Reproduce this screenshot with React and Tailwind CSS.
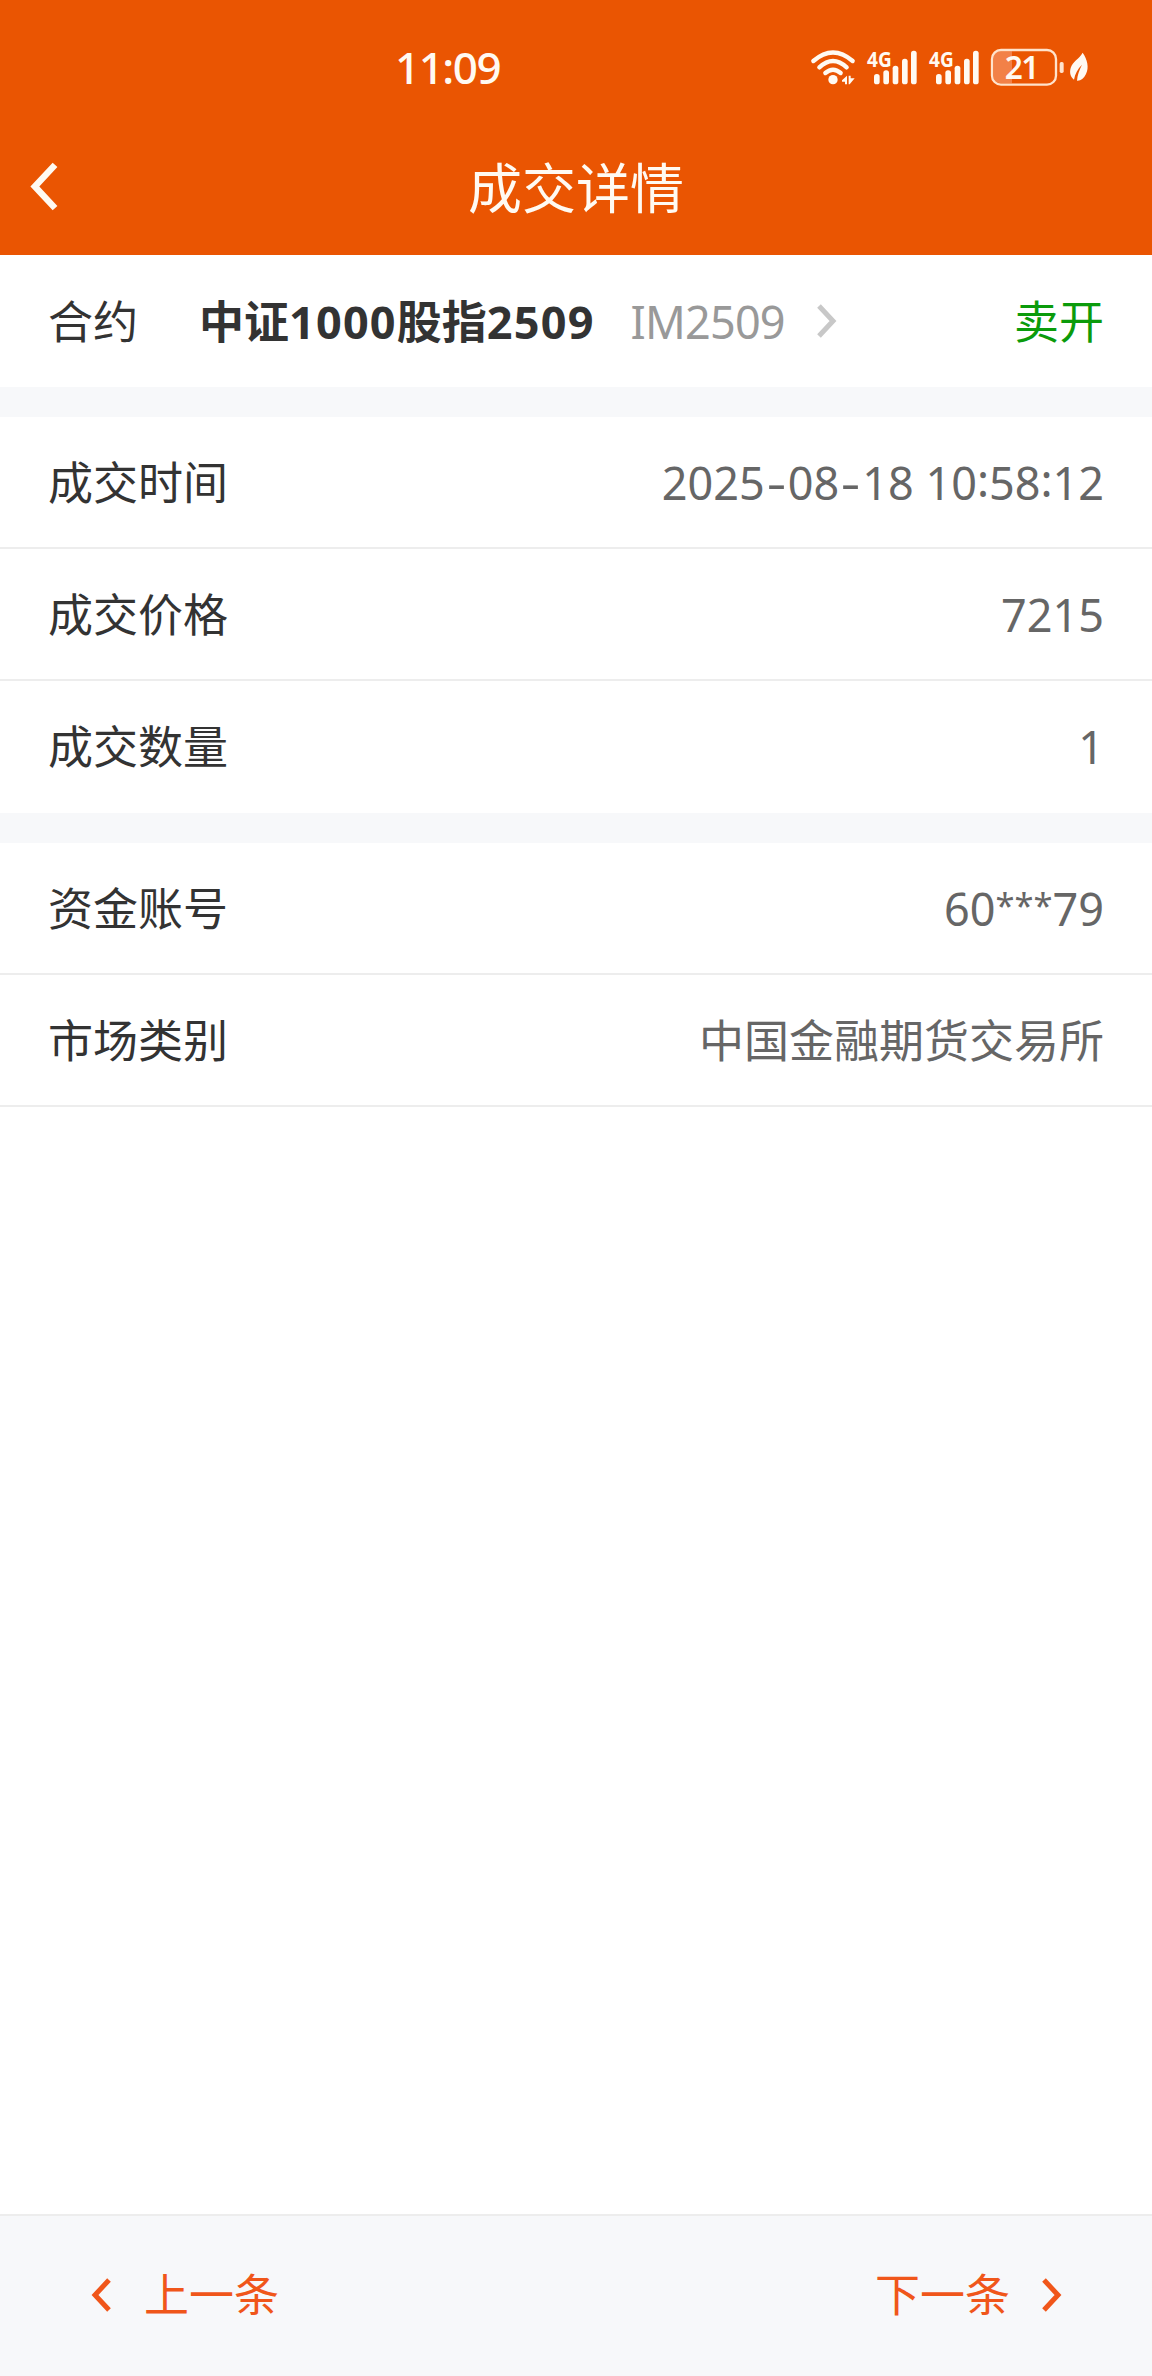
import React from 'react'

function Dash() {
    return <span className="inline-block w-[23px] text-center scale-x-[1.35] -translate-y-px">-</span>
}

const trade = [
    { label: '成交时间', value: <>2025<Dash />08<Dash />18 10<span className="relative -top-[3px]">:</span>58<span className="relative -top-[3px]">:</span>12</> },
    { label: '成交价格', value: '7215' },
    { label: '成交数量', value: '1' },
]

const account = [
    { label: '资金账号', value: <>60<span className="relative -top-[8px] text-[34.5px] leading-[0]">***</span>79</> },
    { label: '市场类别', value: '中国金融期货交易所' },
]

function Chevron({ left, className, stroke = 5 }) {
    return (
        <svg viewBox="0 0 20 34" className={className} fill="none" stroke="currentColor" strokeWidth={stroke}>
            <path d={left ? 'M18 2 L4 17 L18 32' : 'M2 2 L16 17 L2 32'} />
        </svg>
    )
}

function Signal({ x }) {
    return (
        <g transform={`translate(${x} 0)`}>
            <text x="0" y="110" fontSize="64" fontWeight="700" textLength="74" lengthAdjust="spacingAndGlyphs">4G</text>
            <rect x="21" y="132" width="17" height="31" rx="8" />
            <rect x="49" y="121" width="17" height="42" rx="8" />
            <rect x="77" y="107" width="17" height="56" rx="8" />
            <rect x="105" y="86" width="17" height="77" rx="8" />
            <rect x="132" y="62" width="17" height="101" rx="8" />
        </g>
    )
}

function StatusIcons() {
    return (
        <svg viewBox="0 0 990 240" className="w-[330px] h-[80px]" fill="#fffaf2">
            {/* wifi */}
            <g fill="none" stroke="#fffaf2" strokeWidth="13" strokeLinecap="round">
                <path d="M100 93 Q159 42 218 93" />
                <path d="M118 112 Q159 74 200 112" />
                <path d="M136 129 Q159 109 182 129" />
            </g>
            <circle cx="159" cy="149" r="14" />
            <path d="M186 151 L201 137 V163 H195 V155 H186 Z" />
            <path d="M206 137 H212 V145 H224 L209 163 H206 Z" />

            <Signal x={261} />
            <Signal x={447} />

            {/* bateria */}
            <path d="M696 64 H664 Q640 64 640 88 V136 Q640 160 664 160 H696 Z" fill="#f28148" />
            <rect x="636" y="60" width="192" height="104" rx="27" fill="none" stroke="#ffe3cc" strokeWidth="7" />
            <text x="674" y="146" fontSize="95" fontWeight="600" textLength="104">21</text>
            <rect x="839" y="96" width="12" height="33" rx="5" fill="#ffe3cc" />
            <path d="M908 68 C922 88 928 112 918 132 C911 146 902 153 891 152 C892 137 898 119 906 104 C893 117 885 131 882 149 C871 141 868 128 872 114 C878 93 897 88 908 68 Z" />
        </svg>
    )
}

function Row({ label, value, last }) {
    return (
        <div className={`h-[132px] px-12 flex items-center justify-between border-b-2 ${last ? 'border-transparent' : 'border-[#ededed]'}`}>
            <span className="text-[#333333]">{label}</span>
            <span className="text-[#666666]">{value}</span>
        </div>
    )
}

function App() {
    return (
        <div className="w-[1152px] h-[2376px] flex flex-col bg-white text-[45px] leading-none whitespace-nowrap font-['Noto_Sans','Noto_Sans_CJK_SC',sans-serif]">

            <header className="h-[255px] shrink-0 bg-[#ea5502] text-[#fffaf2]">
                <div className="h-[120px] pt-[30px] pl-[395px] pr-[42px] flex justify-between">
                    <span className="pt-[15px] text-[44px] font-medium tracking-[-1.5px]">11:09</span>
                    <StatusIcons />
                </div>
                <div className="h-[135px] px-[29px] flex items-center justify-between">
                    <Chevron left stroke={4.5} className="w-[29px] h-[49px] mb-[2px]" />
                    <h1 className="text-[54px]">成交详情</h1>
                    <span className="w-[29px]"></span>
                </div>
            </header>

            <div className="h-[132px] shrink-0 px-12 flex items-center">
                <span className="text-[#333333]">合约</span>
                <span className="ml-[61px] text-[#333333] font-bold">
                    中证<span className="tracking-[1.2px]">1000</span>股指<span className="tracking-[1.2px]">2509</span>
                </span>
                <span className="ml-[36px] text-[#999999] tracking-[-0.8px]">IM2509</span>
                <Chevron className="ml-8 w-[20px] h-[34px] text-[#c8c8c8]" />
                <span className="ml-auto text-[#0b9b0b]">卖开</span>
            </div>

            <div className="h-[30px] shrink-0 bg-[#f7f8fa]"></div>

            <div>
                {trade.map((item, i) => (
                    <Row key={item.label} {...item} last={i === trade.length - 1} />
                ))}
            </div>

            <div className="h-[30px] shrink-0 bg-[#f7f8fa]"></div>

            <div>
                {account.map((item) => (
                    <Row key={item.label} {...item} />
                ))}
            </div>

            <footer className="mt-auto h-[162px] px-[90px] pb-[3px] flex items-center justify-between bg-[#f7f8fa] border-t-2 border-[#ededed] text-[#f0561a]">
                <button className="flex items-center">
                    <Chevron left className="w-[22px] h-[34px]" />
                    <span className="ml-8">上一条</span>
                </button>
                <button className="flex items-center">
                    <span className="mr-8">下一条</span>
                    <Chevron className="w-[20px] h-[34px]" />
                </button>
            </footer>
        </div>
    )
}

export default App
